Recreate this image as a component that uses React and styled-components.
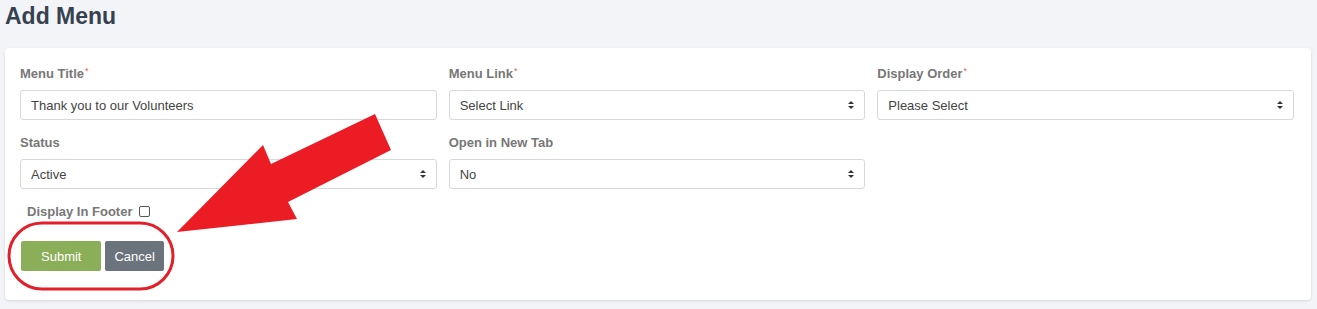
import React from "react";
import styled, { createGlobalStyle } from "styled-components";

const GlobalStyle = createGlobalStyle`
    body {
        margin: 0;
        background-color: #f3f4f7;
        font-family: "Liberation Sans", Arial, sans-serif;
    }
`;

const Page = styled.div`
    position: relative;
    padding: 0 6px 0 5px;
    height: 309px;
    box-sizing: border-box;
`;
const Heading = styled.h1`
    margin: 2px 0 0;
    font-size: 23px;
    line-height: 28px;
    font-weight: bold;
    color: #36414f;
`;
const Card = styled.section`
    margin-top: 18px;
    background-color: white;
    border-radius: 4px;
    box-shadow: 0 1px 3px rgba(0, 0, 0, 0.12);
    padding: 15px 17px 29px 15px;
`;
const Grid = styled.div`
    display: grid;
    grid-template-columns: repeat(3, 1fr);
    column-gap: 12px;
`;
const Group = styled.div`
    margin-bottom: 12px;
`;
const Label = styled.label`
    display: block;
    font-size: 13px;
    line-height: 20px;
    font-weight: bold;
    color: #777777;
    margin-bottom: 6px;
    padding-top: 1px;
    sup {
        color: #e15a5a;
        font-size: 9px;
        line-height: 0;
        font-weight: normal;
        vertical-align: 4px;
        margin-left: 1px;
    }
`;
const TextInput = styled.input`
    display: block;
    width: 100%;
    box-sizing: border-box;
    height: 30px;
    border: 1px solid #d5d9de;
    border-radius: 3px;
    padding: 0 10px;
    font-family: inherit;
    font-size: 13px;
    color: #444;
`;
const SelectWrap = styled.div`
    position: relative;
    &::before, &::after {
        content: "";
        position: absolute;
        right: 11px;
        border-left: 3px solid transparent;
        border-right: 3px solid transparent;
        pointer-events: none;
    }
    &::before {
        top: 11px;
        border-bottom: 3px solid #333;
    }
    &::after {
        top: 16px;
        border-top: 3px solid #333;
    }
`;
const Select = styled.select`
    display: block;
    width: 100%;
    height: 30px;
    appearance: none;
    background: white;
    border: 1px solid #d5d9de;
    border-radius: 3px;
    padding: 0 10px;
    font-family: inherit;
    font-size: 13px;
    color: #444;
`;
const CheckRow = styled.div`
    display: flex;
    align-items: center;
    gap: 7px;
    padding-left: 7px;
    label {
        margin: 0;
    }
`;
const Check = styled.input`
    appearance: none;
    margin: 0;
    width: 11px;
    height: 11px;
    border: 1px solid #555;
    border-radius: 2px;
    background: white;
`;
const Buttons = styled.div`
    display: flex;
    gap: 4px;
    margin-top: 19px;
    padding-left: 1px;
`;
const Button = styled.button`
    border: 0;
    height: 30px;
    padding: 0 ${({ $pad }) => $pad}px;
    border-radius: 2px;
    background-color: ${({ $bg }) => $bg};
    color: white;
    font-family: inherit;
    font-size: 13px;
`;
const Overlay = styled.svg`
    position: absolute;
    left: 0;
    top: 0;
    pointer-events: none;
`;

const Field = ({ label, required, children }) => (
    <Group>
        <Label>
            {label}
            {required && <sup>*</sup>}
        </Label>
        {children}
    </Group>
);

const Dropdown = ({ value }) => (
    <SelectWrap>
        <Select defaultValue={value}>
            <option>{value}</option>
        </Select>
    </SelectWrap>
);

const App = () => {
    return (
        <Page>
            <GlobalStyle />
            <Heading>Add Menu</Heading>
            <Card>
                <Grid>
                    <Field label="Menu Title" required>
                        <TextInput defaultValue="Thank you to our Volunteers" />
                    </Field>
                    <Field label="Menu Link" required>
                        <Dropdown value="Select Link" />
                    </Field>
                    <Field label="Display Order" required>
                        <Dropdown value="Please Select" />
                    </Field>
                    <Field label="Status">
                        <Dropdown value="Active" />
                    </Field>
                    <Field label="Open in New Tab">
                        <Dropdown value="No" />
                    </Field>
                </Grid>
                <CheckRow>
                    <Label>Display In Footer</Label>
                    <Check type="checkbox" />
                </CheckRow>
                <Buttons>
                    <Button $bg="#8bae58" $pad={20}>Submit</Button>
                    <Button $bg="#6b747c" $pad={9}>Cancel</Button>
                </Buttons>
            </Card>
            <Overlay width="1317" height="309" viewBox="0 0 1317 309">
                <polygon
                    points="177,230 297,217 288,200 391,148 375,112 271,162 263,143"
                    fill="#ec1c24"
                />
                <rect x="9" y="221" width="164" height="66" rx="33" ry="33"
                    fill="none" stroke="#e3202a" strokeWidth="3" />
            </Overlay>
        </Page>
    );
};

export default App;
